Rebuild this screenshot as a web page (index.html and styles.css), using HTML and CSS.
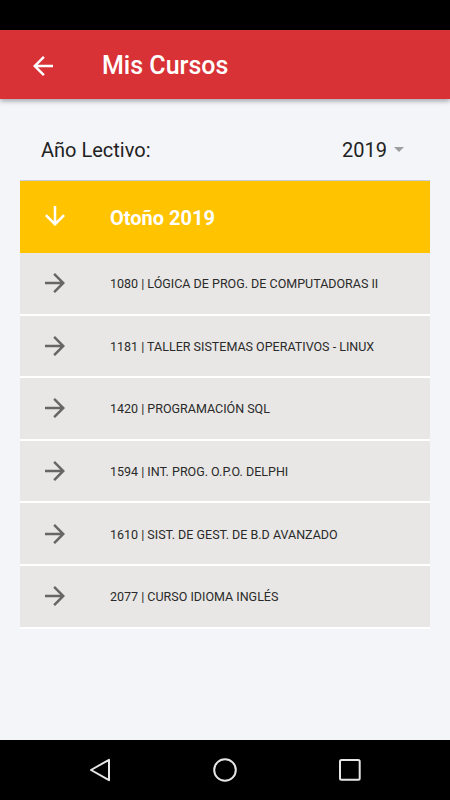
FILE: index.html
```html
<!DOCTYPE html>
<html lang="es">
<head>
<meta charset="utf-8">
<title>Mis Cursos</title>
<link rel="stylesheet" href="styles.css">
</head>
<body>
<div class="screen">
  <div class="statusbar"></div>
  <header class="appbar">
    <svg class="appbar-icon" viewBox="0 0 24 24"><path d="M20 11H7.83l5.59-5.59L12 4l-8 8 8 8 1.41-1.41L7.83 13H20v-2z"/></svg>
    <h1 class="appbar-title">Mis Cursos</h1>
  </header>
  <main class="content">
    <div class="filter">
      <span class="filter-label">Año Lectivo:</span>
      <span class="filter-select">2019<span class="caret"></span></span>
    </div>
    <section class="card">
      <div class="card-head">
        <svg class="icon" viewBox="0 0 24 24"><path d="M20 12l-1.41-1.41L13 16.17V4h-2v12.17l-5.58-5.59L4 12l8 8 8-8z"/></svg>
        <span class="card-title">Otoño 2019</span>
      </div>
      <ul class="course-list">
        <li class="course">
          <svg class="icon" viewBox="0 0 24 24"><path d="M12 4l-1.41 1.41L16.17 11H4v2h12.17l-5.58 5.59L12 20l8-8z"/></svg>
          <span class="course-name">1080 | LÓGICA DE PROG. DE COMPUTADORAS II</span>
        </li>
        <li class="course">
          <svg class="icon" viewBox="0 0 24 24"><path d="M12 4l-1.41 1.41L16.17 11H4v2h12.17l-5.58 5.59L12 20l8-8z"/></svg>
          <span class="course-name">1181 | TALLER SISTEMAS OPERATIVOS - LINUX</span>
        </li>
        <li class="course">
          <svg class="icon" viewBox="0 0 24 24"><path d="M12 4l-1.41 1.41L16.17 11H4v2h12.17l-5.58 5.59L12 20l8-8z"/></svg>
          <span class="course-name">1420 | PROGRAMACIÓN SQL</span>
        </li>
        <li class="course">
          <svg class="icon" viewBox="0 0 24 24"><path d="M12 4l-1.41 1.41L16.17 11H4v2h12.17l-5.58 5.59L12 20l8-8z"/></svg>
          <span class="course-name">1594 | INT. PROG. O.P.O. DELPHI</span>
        </li>
        <li class="course">
          <svg class="icon" viewBox="0 0 24 24"><path d="M12 4l-1.41 1.41L16.17 11H4v2h12.17l-5.58 5.59L12 20l8-8z"/></svg>
          <span class="course-name">1610 | SIST. DE GEST. DE B.D AVANZADO</span>
        </li>
        <li class="course">
          <svg class="icon" viewBox="0 0 24 24"><path d="M12 4l-1.41 1.41L16.17 11H4v2h12.17l-5.58 5.59L12 20l8-8z"/></svg>
          <span class="course-name">2077 | CURSO IDIOMA INGLÉS</span>
        </li>
      </ul>
    </section>
  </main>
  <nav class="navbar">
    <svg class="nav-icon" viewBox="0 0 24 24"><polygon points="3,12 21,1.8 21,22.2"/></svg>
    <svg class="nav-icon" viewBox="0 0 24 24"><circle cx="12" cy="12" r="10.8"/></svg>
    <svg class="nav-icon" viewBox="0 0 24 24"><rect x="2" y="2" width="19.7" height="19.7" rx="1.5"/></svg>
  </nav>
</div>
</body>
</html>
```
FILE: styles.css
```css
* { box-sizing: border-box; }
html, body { margin: 0; padding: 0; }
body {
  font-family: Roboto, "Noto Sans", "Liberation Sans", sans-serif;
  background: #f4f5f9;
}
.screen {
  width: 450px;
  height: 800px;
  display: flex;
  flex-direction: column;
  background: #f4f5f9;
}
.statusbar {
  height: 30px;
  background: #000;
  flex: none;
}
.appbar {
  position: relative;
  z-index: 1;
  height: 69px;
  flex: none;
  background: #d93236;
  display: flex;
  align-items: center;
  padding-left: 28px;
  gap: 44px;
  box-shadow: 0 2px 5px rgba(0, 0, 0, 0.35);
}
.appbar-icon {
  width: 30px;
  height: 30px;
  fill: #fff;
  margin-top: 2px;
}
.appbar-title {
  margin: 2px 0 0;
  color: #fff;
  font-size: 25px;
  font-weight: 500;
}
.content {
  flex: 1;
  padding: 25px 20px 0;
}
.filter {
  height: 51px;
  display: flex;
  align-items: center;
  justify-content: space-between;
  padding: 0 26px 0 21px;
  margin-bottom: 5px;
  font-size: 20px;
  color: #222;
}
.filter-select {
  display: flex;
  align-items: center;
}
.caret {
  width: 0;
  height: 0;
  margin-left: 7px;
  border-left: 5.5px solid transparent;
  border-right: 5.5px solid transparent;
  border-top: 5.5px solid #9e9e9e;
  margin-top: -1px;
}
.card {
  border-top: 1px solid #c8ccd8;
}
.card-head {
  height: 72px;
  background: #ffc300;
  display: flex;
  align-items: center;
  padding-left: 20px;
  gap: 40px;
}
.icon {
  width: 30px;
  height: 30px;
  flex: none;
}
.card-head .icon { fill: #fff; margin-top: -2px; }
.card-title {
  color: #fff;
  font-weight: 700;
  font-size: 20px;
  margin-top: 2px;
}
.course-list {
  list-style: none;
  margin: 0;
  padding: 0;
}
.course {
  height: 62.6px;
  background: #e8e7e5;
  border-bottom: 2.5px solid #fff;
  display: flex;
  align-items: center;
  padding-left: 20px;
  gap: 40px;
}
.course .icon { fill: #666; }
.course-name {
  font-size: 12.5px;
  color: #2a2a2a;
  margin-top: 1px;
}
.navbar {
  height: 60px;
  flex: none;
  background: #000;
  display: flex;
  align-items: center;
  justify-content: center;
  gap: 101px;
}
.nav-icon {
  width: 24px;
  height: 24px;
  fill: none;
  stroke: #e6e6e6;
  stroke-width: 2;
  stroke-linejoin: round;
}
```
